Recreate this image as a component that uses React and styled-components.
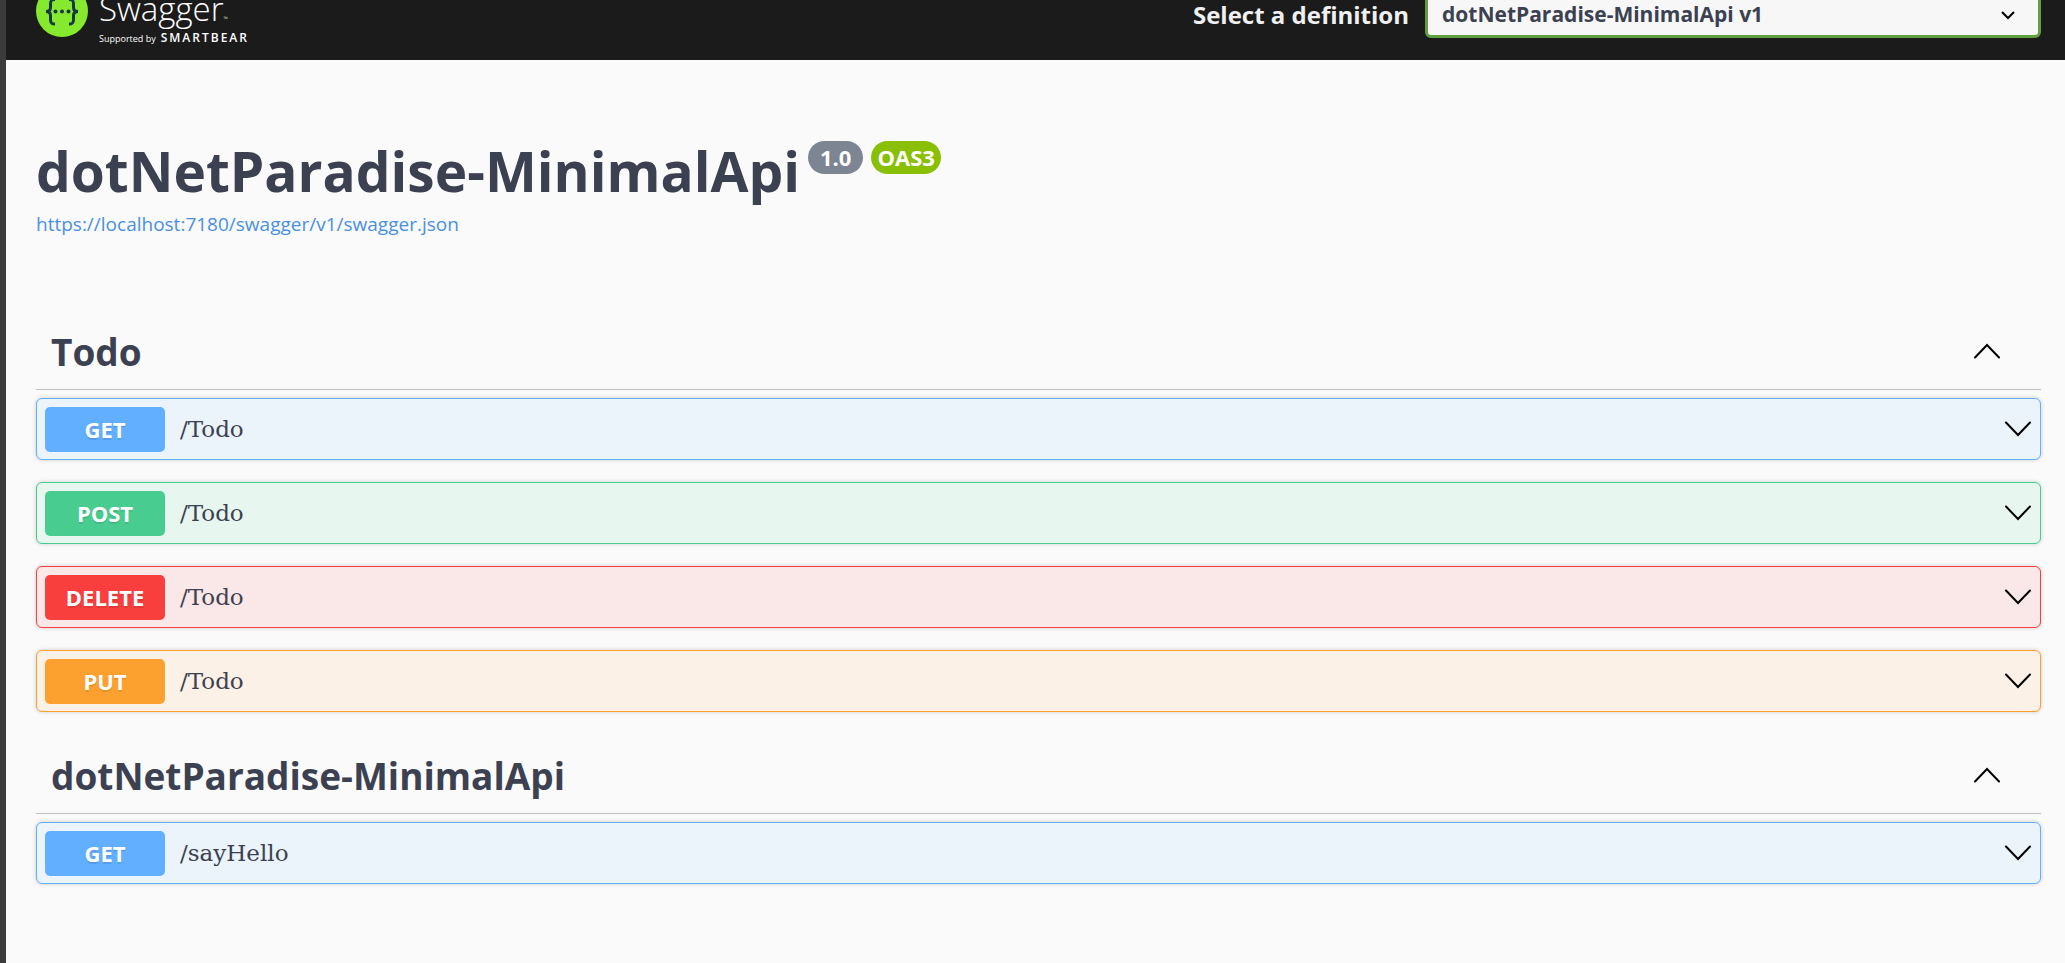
import React, { useState } from "react";
import styled, { createGlobalStyle } from "styled-components";

const GlobalStyle = createGlobalStyle`
  *, *::before, *::after { box-sizing: border-box; }
  body {
    margin: 0;
    background: #fafafa;
    color: #3b4151;
    font-family: "Open Sans", "Noto Sans", sans-serif;
  }
`;

const METHOD_COLORS = {
  GET: { main: "#61affe", tint: "#ebf3fb" },
  POST: { main: "#49cc90", tint: "#e8f6f0" },
  DELETE: { main: "#f93e3e", tint: "#fae7e7" },
  PUT: { main: "#fca130", tint: "#fbf1e6" },
};

const Page = styled.div`
  min-height: 100vh;
  border-left: 6px solid #3b3b3b;
  background: #fafafa;
`;

const Topbar = styled.header`
  display: flex;
  align-items: flex-end;
  justify-content: space-between;
  height: 60px;
  padding: 0 24px 0 30px;
  overflow: hidden;
  background: #1b1b1b;
`;

const LogoLink = styled.a`
  display: flex;
  align-items: flex-end;
  gap: 11px;
  padding-bottom: 14px;
  color: #fff;
  text-decoration: none;
`;

const LogoMark = styled.svg`
  width: 52px;
  height: 52px;
  margin-bottom: 9px;
`;

const LogoText = styled.span`
  display: flex;
  flex-direction: column;
`;

const Wordmark = styled.span`
  display: flex;
  align-items: baseline;
  font-size: 33px;
  font-weight: 300;
  line-height: 24px;
`;

const Trademark = styled.span`
  font-size: 6px;
`;

const Tagline = styled.span`
  display: flex;
  align-items: baseline;
  gap: 5px;
  font-size: 9px;
  line-height: 14px;
`;

const Sponsor = styled.strong`
  font-size: 12px;
  font-weight: 600;
  letter-spacing: 2px;
`;

const DefinitionPicker = styled.div`
  display: flex;
  align-items: center;
  gap: 16px;
  padding-bottom: 22px;
`;

const PickerLabel = styled.label`
  color: #f0f0f0;
  font-size: 24px;
  font-weight: 700;
`;

const SelectBox = styled.div`
  position: relative;
  width: 616px;
`;

const Select = styled.select`
  display: block;
  width: 100%;
  height: 48px;
  padding: 0 60px 0 14px;
  appearance: none;
  border: 3px solid #62a03f;
  border-radius: 6px;
  background: #f7f7f7;
  color: #3b4151;
  font-family: inherit;
  font-size: 21px;
  font-weight: 700;
`;

const SelectArrow = styled.svg`
  position: absolute;
  top: 20px;
  right: 25px;
  width: 16px;
  height: 10px;
  pointer-events: none;
`;

const Main = styled.main`
  padding: 72px 24px 48px 30px;
`;

const Info = styled.section`
  display: flex;
  flex-direction: column;
  align-items: flex-start;
`;

const TitleRow = styled.div`
  display: flex;
  align-items: flex-start;
  gap: 8px;
`;

const Title = styled.h1`
  margin: 0;
  font-size: 55px;
  font-weight: 700;
  line-height: 78px;
`;

const Badge = styled.span`
  margin-top: 9px;
  padding: 0 ${(p) => (p.$wide ? 12 : 6)}px;
  border-radius: 17px;
  background: ${(p) => p.$color};
  color: #fff;
  font-size: 22px;
  font-weight: 700;
  line-height: 33px;
`;

const SpecLink = styled.a`
  color: #4990e2;
  font-size: 19px;
  line-height: 28px;
  text-decoration: none;
`;

const Tags = styled.div`
  display: flex;
  flex-direction: column;
  gap: 25px;
  padding-top: 75px;
`;

const TagHeader = styled.h2`
  display: flex;
  align-items: center;
  justify-content: space-between;
  height: 77px;
  margin: 0 0 8px;
  padding: 0 41px 0 15px;
  border-bottom: 1px solid #bfc0c3;
  font-size: 37px;
  font-weight: 700;
`;

const IconButton = styled.button`
  display: flex;
  padding: 0;
  border: 0;
  background: none;
  cursor: pointer;
`;

const Chevron = styled.svg`
  display: block;
  flex: none;
  width: 26px;
  height: 16px;
`;

const Operations = styled.div`
  display: flex;
  flex-direction: column;
  gap: 22px;
`;

const OperationRow = styled.button`
  display: flex;
  align-items: center;
  width: 100%;
  height: 62px;
  padding: 0 9px 0 8px;
  border: 1px solid ${(p) => METHOD_COLORS[p.$method].main};
  border-radius: 6px;
  background: ${(p) => METHOD_COLORS[p.$method].tint};
  box-shadow: 0 0 4px rgba(0, 0, 0, 0.19);
  color: #3b4151;
  text-align: left;
  cursor: pointer;
`;

const Method = styled.span`
  width: 120px;
  border-radius: 5px;
  background: ${(p) => METHOD_COLORS[p.$method].main};
  color: #fff;
  font-family: "Open Sans", "Noto Sans", sans-serif;
  font-size: 22px;
  font-weight: 700;
  line-height: 45px;
  text-align: center;
  text-shadow: 0 2px 0 rgba(0, 0, 0, 0.1);
`;

const Path = styled.span`
  flex: 1;
  padding-left: 15px;
  font-family: "DejaVu Serif", serif;
  font-size: 23px;
`;

const TAGS = [
  {
    name: "Todo",
    operations: [
      { method: "GET", path: "/Todo" },
      { method: "POST", path: "/Todo" },
      { method: "DELETE", path: "/Todo" },
      { method: "PUT", path: "/Todo" },
    ],
  },
  {
    name: "dotNetParadise-MinimalApi",
    operations: [{ method: "GET", path: "/sayHello" }],
  },
];

function Arrow({ up }) {
  return (
    <Chevron viewBox="0 0 26 16" fill="none" stroke="#000" strokeWidth="2" strokeLinecap="round" aria-hidden="true">
      <path d={up ? "M1 14.5 13 2 25 14.5" : "M1 1.5 13 14 25 1.5"} />
    </Chevron>
  );
}

function Logo() {
  return (
    <LogoLink href="#" aria-label="Swagger, supported by SmartBear">
      <LogoMark viewBox="0 0 52 52" aria-hidden="true">
        <circle cx="26" cy="26" r="26" fill="#85ea2d" />
        <g fill="none" stroke="#173647" strokeWidth="3">
          <path d="M19 14.5c-4 0-4.500 1.500-4.500 4.500v3.500c0 2.800-1.500 4-4.500 4 3 0 4.500 1.200 4.500 4v4c0 3 .5 4.500 4.500 4.500" />
          <path d="M33 14.500c4 0 4.500 1.500 4.500 4.500v3.500c0 2.800 1.500 4 4.500 4-3 0-4.500 1.200-4.500 4v4c0 3-.5 4.500-4.500 4.500" />
        </g>
        <g fill="#173647">
          <circle cx="19.500" cy="26.500" r="2" />
          <circle cx="26" cy="26.500" r="2" />
          <circle cx="32.500" cy="26.500" r="2" />
        </g>
      </LogoMark>
      <LogoText>
        <Wordmark>
          Swagger<Trademark>™</Trademark>
        </Wordmark>
        <Tagline>
          Supported by <Sponsor>SMARTBEAR</Sponsor>
        </Tagline>
      </LogoText>
    </LogoLink>
  );
}

function Tag({ name, operations }) {
  const [open, setOpen] = useState(true);
  return (
    <section>
      <TagHeader>
        {name}
        <IconButton type="button" aria-label={`Toggle ${name}`} aria-expanded={open} onClick={() => setOpen(!open)}>
          <Arrow up={open} />
        </IconButton>
      </TagHeader>
      {open && (
        <Operations>
          {operations.map((op) => (
            <OperationRow key={op.method} type="button" $method={op.method}>
              <Method $method={op.method}>{op.method}</Method>
              <Path>{op.path}</Path>
              <Arrow />
            </OperationRow>
          ))}
        </Operations>
      )}
    </section>
  );
}

export default function App() {
  return (
    <>
      <GlobalStyle />
      <Page>
        <Topbar>
          <Logo />
          <DefinitionPicker>
            <PickerLabel htmlFor="definition">Select a definition</PickerLabel>
            <SelectBox>
              <Select id="definition">
                <option>dotNetParadise-MinimalApi v1</option>
              </Select>
              <SelectArrow viewBox="0 0 16 10" fill="none" stroke="#000" strokeWidth="2" aria-hidden="true">
                <path d="M2 2 8 8 14 2" />
              </SelectArrow>
            </SelectBox>
          </DefinitionPicker>
        </Topbar>
        <Main>
          <Info>
            <TitleRow>
              <Title>dotNetParadise-MinimalApi</Title>
              <Badge $color="#7d8492" $wide>
                1.0
              </Badge>
              <Badge $color="#89bf04">OAS3</Badge>
            </TitleRow>
            <SpecLink href="https://localhost:7180/swagger/v1/swagger.json">
              https://localhost:7180/swagger/v1/swagger.json
            </SpecLink>
          </Info>
          <Tags>
            {TAGS.map((tag) => (
              <Tag key={tag.name} {...tag} />
            ))}
          </Tags>
        </Main>
      </Page>
    </>
  );
}
